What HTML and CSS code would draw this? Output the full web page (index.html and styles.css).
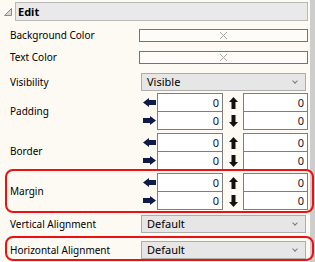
FILE: index.html
```html
<!DOCTYPE html>
<html>
<head lang="en">
    <meta charset="UTF-8">
    <title>Edit</title>
    <link rel="stylesheet" href="styles.css">
</head>
<body>
<div id="page">
    <div id="panel">
        <div class="header">
            <svg class="toggle" width="10" height="10" viewBox="0 0 10 10"><path d="M8.5 1.5 L8.5 8.5 L1.5 8.5 Z" fill="#d8d8d8" stroke="#8a8a8a" stroke-width="1"/></svg>
            <div class="title">Edit</div>
        </div>

        <div class="row r-bg">
            <div class="label">Background Color</div>
            <div class="color"><svg width="9" height="9" viewBox="0 0 9 9"><path d="M1 1 L8 8 M8 1 L1 8" stroke="#a8a8a8" stroke-width="1"/></svg></div>
        </div>
        <div class="row r-text">
            <div class="label">Text Color</div>
            <div class="color"><svg width="9" height="9" viewBox="0 0 9 9"><path d="M1 1 L8 8 M8 1 L1 8" stroke="#a8a8a8" stroke-width="1"/></svg></div>
        </div>
        <div class="row r-vis">
            <div class="label">Visibility</div>
            <div class="select"><span>Visible</span><i class="chev"></i></div>
        </div>

        <div class="row r-pad">
            <div class="label">Padding</div>
            <div class="spin">
                <div class="line">
                    <span class="arr"><svg width="13" height="9" viewBox="0 0 13 9"><path d="M0 4.5 L6 0 L6 2 L13 2 L13 7 L6 7 L6 9 Z" fill="#101a48"/></svg></span>
                    <div class="num">0</div>
                    <span class="arr"><svg width="9" height="12" viewBox="0 0 9 12"><path d="M4.5 0 L9 5 L6.5 5 L6.5 12 L2.5 12 L2.5 5 L0 5 Z" fill="#111"/></svg></span>
                    <div class="num">0</div>
                </div>
                <div class="line">
                    <span class="arr"><svg width="13" height="9" viewBox="0 0 13 9"><path d="M13 4.5 L7 0 L7 2 L0 2 L0 7 L7 7 L7 9 Z" fill="#101a48"/></svg></span>
                    <div class="num">0</div>
                    <span class="arr"><svg width="9" height="12" viewBox="0 0 9 12"><path d="M4.5 12 L9 7 L6.5 7 L6.5 0 L2.5 0 L2.5 7 L0 7 Z" fill="#111"/></svg></span>
                    <div class="num">0</div>
                </div>
            </div>
        </div>

        <div class="row r-border">
            <div class="label">Border</div>
            <div class="spin">
                <div class="line">
                    <span class="arr"><svg width="13" height="9" viewBox="0 0 13 9"><path d="M0 4.5 L6 0 L6 2 L13 2 L13 7 L6 7 L6 9 Z" fill="#101a48"/></svg></span>
                    <div class="num">0</div>
                    <span class="arr"><svg width="9" height="12" viewBox="0 0 9 12"><path d="M4.5 0 L9 5 L6.5 5 L6.5 12 L2.5 12 L2.5 5 L0 5 Z" fill="#111"/></svg></span>
                    <div class="num">0</div>
                </div>
                <div class="line">
                    <span class="arr"><svg width="13" height="9" viewBox="0 0 13 9"><path d="M13 4.5 L7 0 L7 2 L0 2 L0 7 L7 7 L7 9 Z" fill="#101a48"/></svg></span>
                    <div class="num">0</div>
                    <span class="arr"><svg width="9" height="12" viewBox="0 0 9 12"><path d="M4.5 12 L9 7 L6.5 7 L6.5 0 L2.5 0 L2.5 7 L0 7 Z" fill="#111"/></svg></span>
                    <div class="num">0</div>
                </div>
            </div>
        </div>

        <div class="row r-margin marked">
            <div class="label">Margin</div>
            <div class="spin">
                <div class="line">
                    <span class="arr"><svg width="13" height="9" viewBox="0 0 13 9"><path d="M0 4.5 L6 0 L6 2 L13 2 L13 7 L6 7 L6 9 Z" fill="#101a48"/></svg></span>
                    <div class="num">0</div>
                    <span class="arr"><svg width="9" height="12" viewBox="0 0 9 12"><path d="M4.5 0 L9 5 L6.5 5 L6.5 12 L2.5 12 L2.5 5 L0 5 Z" fill="#111"/></svg></span>
                    <div class="num">0</div>
                </div>
                <div class="line">
                    <span class="arr"><svg width="13" height="9" viewBox="0 0 13 9"><path d="M13 4.5 L7 0 L7 2 L0 2 L0 7 L7 7 L7 9 Z" fill="#101a48"/></svg></span>
                    <div class="num">0</div>
                    <span class="arr"><svg width="9" height="12" viewBox="0 0 9 12"><path d="M4.5 12 L9 7 L6.5 7 L6.5 0 L2.5 0 L2.5 7 L0 7 Z" fill="#111"/></svg></span>
                    <div class="num">0</div>
                </div>
            </div>
        </div>

        <div class="row r-valign">
            <div class="label">Vertical Alignment</div>
            <div class="select"><span>Default</span><i class="chev"></i></div>
        </div>
        <div class="row r-halign marked">
            <div class="label">Horizontal Alignment</div>
            <div class="select"><span>Default</span><i class="chev"></i></div>
        </div>
    </div>
    <div id="scrollbar"></div>
</div>
</body>
</html>
```

FILE: styles.css
```css
*{
    margin: 0;
    padding: 0;
    box-sizing: border-box;
}
html, body{
    width: 315px;
    height: 262px;
    overflow: hidden;
    background: #fdf9f3;
}
body{
    font-family: "Noto Sans", "Open Sans", sans-serif;
    font-size: 10px;
    color: #000;
}
#page{
    display: flex;
    height: 262px;
}
#panel{
    width: 310px;
    padding-left: 10px;
}
#scrollbar{
    width: 5px;
    background: #cdcdcd;
}
.header{
    display: flex;
    align-items: center;
    margin: 2px 0 0 -7px;
    height: 19px;
}
.toggle{
    width: 10px;
    margin-right: 2px;
}
.title{
    flex: 1;
    height: 19px;
    margin-right: 2px;
    border: 1px solid #b8b8b8;
    background: #e9e9e9;
    font-weight: bold;
    font-size: 11px;
    line-height: 17px;
    padding-left: 2px;
    color: #000;
}
.row{
    display: flex;
    align-items: center;
    position: relative;
}
.label{
    width: 129px;
    white-space: nowrap;
    line-height: 13px;
}
.r-bg{ margin-top: 8px; }
.r-text{ margin-top: 9px; }
.r-vis{ margin-top: 9px; }
.r-pad{ margin-top: 2px; }
.r-border{ margin-top: 3px; }
.r-margin{ margin-top: 3px; }
.r-valign{ margin-top: 5px; }
.r-halign{ margin-top: 8px; }

.color{
    width: 169px;
    height: 13px;
    border: 1px solid #747474;
    background: #fefcf8;
    display: flex;
    align-items: center;
    justify-content: center;
}
.select{
    width: 165px;
    height: 18px;
    margin-left: 2px;
    border: 1px solid #adadad;
    background: #e6e6e6;
    display: flex;
    align-items: center;
    justify-content: space-between;
    padding: 0 8px 0 5px;
    font-size: 11px;
    line-height: 16px;
    color: #000;
}
.chev{
    width: 4px;
    height: 4px;
    border-right: 1px solid #7a7a7a;
    border-bottom: 1px solid #7a7a7a;
    transform: rotate(45deg);
    margin-top: -2px;
}
.spin{
    width: 169px;
}
.line{
    display: flex;
    align-items: center;
    height: 19px;
}
.line + .line{
    margin-top: -1px;
}
.arr{
    display: flex;
    justify-content: center;
    width: 18px;
    padding-left: 2px;
}
.num + .arr{
    width: 20px;
    padding-left: 0;
}
.num{
    width: 66px;
    height: 19px;
    border: 1px solid #7e7e7e;
    background: #fff;
    text-align: right;
    padding-right: 3px;
    line-height: 17px;
    font-size: 11px;
    color: #101030;
}
.num:last-child{
    width: 65px;
}
.marked::before{
    content: "";
    position: absolute;
    left: -5px;
    right: -4px;
    top: -4px;
    bottom: -3px;
    border: 2px solid #ee1111;
    border-radius: 8px;
    z-index: 2;
}
.r-halign::before{
    top: -5px;
    bottom: -2px;
}
```
